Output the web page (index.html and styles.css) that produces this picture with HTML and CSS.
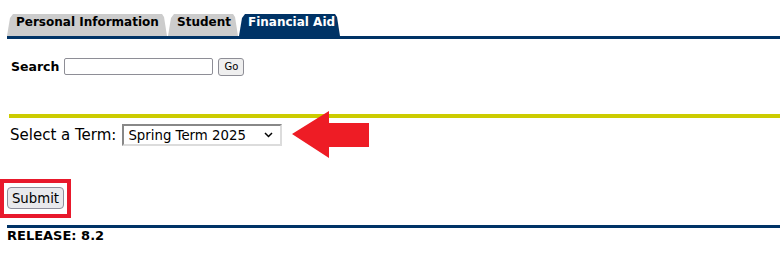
FILE: index.html
```html
<!DOCTYPE html>
<html>
<head>
<meta charset="utf-8">
<link rel="stylesheet" href="styles.css">
</head>
<body>
<div class="page">
  <nav class="tabs">
    <a class="tab tab-personal">Personal Information</a>
    <a class="tab tab-student">Student</a>
    <a class="tab tab-aid active">Financial Aid</a>
  </nav>
  <form class="search">
    <label class="search-label">Search</label>
    <input class="search-input" type="text">
    <button class="go" type="button">Go</button>
  </form>
  <div class="rule-yellow"></div>
  <div class="term-row">
    <label class="term-label">Select a Term:</label>
    <div class="select">
      <span class="select-text">Spring Term 2025</span>
      <svg class="chev" width="9" height="6" viewBox="0 0 9 6"><path d="M1 1 L4.5 4.5 L8 1" fill="none" stroke="#000" stroke-width="1.5"/></svg>
    </div>
  </div>
  <div class="submit-box">
    <button class="submit" type="button">Submit</button>
  </div>
  <div class="rule-blue"></div>
  <div class="release">RELEASE: 8.2</div>
  <svg class="arrow" width="78" height="48" viewBox="0 0 78 48"><polygon points="0,23 37,0 37,12 77,12 77,36 37,36 37,47" fill="#ee1c25"/></svg>
</div>
</body>
</html>
```
FILE: styles.css
```css
html, body {
  margin: 0;
  padding: 0;
  background: #fff;
}
.page {
  position: relative;
  width: 780px;
  height: 268px;
  font-family: "DejaVu Sans", Verdana, sans-serif;
  color: #000;
}
.tabs {
  display: flex;
  gap: 1px;
  margin: 0 0 0 7px;
  padding-top: 14px;
  border-bottom: 3px solid #003366;
  height: 22px;
}
.tab {
  display: block;
  box-sizing: border-box;
  height: 22px;
  padding: 1px 0 0 9px;
  line-height: 14px;
  background: #cccccc;
  font-size: 12px;
  font-weight: bold;
  color: #000;
  white-space: nowrap;
  clip-path: polygon(0 100%, 3px 4px, 6px 0, calc(100% - 5px) 0, calc(100% - 3px) 3px, 100% 100%);
}
.tab-personal { width: 160px; }
.tab-student { width: 70px; }
.tab-aid { width: 101px; }
.tab.active {
  background: #003366;
  color: #fff;
}
.search {
  display: flex;
  align-items: center;
  margin: 19px 0 0 11px;
  height: 17px;
}
.search-label {
  font-size: 12.5px;
  font-weight: bold;
  margin-right: 5px;
}
.search-input {
  box-sizing: border-box;
  width: 149px;
  height: 17px;
  border: 1px solid #8e8e96;
  border-radius: 2px;
  padding: 0;
  margin: 0;
}
.go {
  box-sizing: border-box;
  width: 26px;
  height: 18px;
  margin-left: 5px;
  padding: 0;
  font-family: "DejaVu Sans", sans-serif;
  font-size: 10px;
  background: #efefef;
  border: 1px solid #8e8e96;
  border-radius: 3px;
  color: #000;
}
.rule-yellow {
  margin: 39px 0 0 9px;
  height: 4px;
  background: #cccc00;
}
.term-row {
  display: flex;
  align-items: center;
  margin: 6px 0 0 10px;
  height: 22px;
}
.term-label {
  font-size: 15px;
  margin-right: 6px;
}
.select {
  box-sizing: border-box;
  display: flex;
  align-items: center;
  justify-content: space-between;
  width: 160px;
  height: 22px;
  padding: 0 7px 0 4px;
  border: 2px solid #dcdcdc;
  border-left-color: #888;
  border-top-color: #888;
  font-size: 13.3px;
}
.submit-box {
  display: inline-block;
  box-sizing: border-box;
  margin-top: 33px;
  width: 71px;
  height: 39px;
  padding: 4px 0 0 3px;
  border: 4px solid #e8192c;
}
.submit {
  box-sizing: border-box;
  width: 57px;
  height: 22px;
  padding: 0;
  font-family: "DejaVu Sans", sans-serif;
  font-size: 13.3px;
  color: #000;
  background: #e9e9ed;
  border: 1px solid #8f8f9d;
  border-radius: 4px;
}
.rule-blue {
  margin: 7px 0 0 7px;
  height: 3px;
  background: #003366;
}
.release {
  margin: 0 0 0 7px;
  font-size: 13px;
  font-weight: bold;
  line-height: 16px;
}
.arrow {
  position: absolute;
  left: 292px;
  top: 111px;
}
```
